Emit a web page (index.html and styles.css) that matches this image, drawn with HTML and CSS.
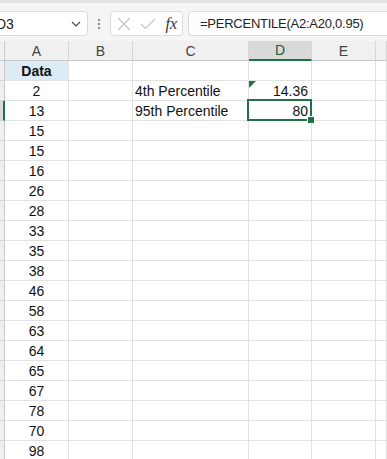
FILE: index.html
```html
<!DOCTYPE html>
<html lang="en">

<head>
    <meta charset="UTF-8">
    <title>PERCENTILE</title>
    <link rel="stylesheet" href="styles.css">
</head>

<body>
    <div class="toolbar">
        <div class="namebox">
            <span class="name">D3</span>
            <svg class="chevron" width="10" height="6" viewBox="0 0 10 6">
                <path d="M1 1 L5 5 L9 1" fill="none" stroke="#444" stroke-width="1.2" />
            </svg>
        </div>
        <div class="dots">
            <span></span>
            <span></span>
            <span></span>
        </div>
        <div class="actions">
            <svg width="14" height="14" viewBox="0 0 14 14">
                <path d="M1 1 L13 13 M13 1 L1 13" stroke="#c4c4c4" stroke-width="1.2" />
            </svg>
            <svg width="16" height="12" viewBox="0 0 16 12">
                <path d="M1 6 L5.5 10.5 L15 1" fill="none" stroke="#c4c4c4" stroke-width="1.2" />
            </svg>
            <span class="fx">fx</span>
        </div>
        <div class="formula">=PERCENTILE(A2:A20,0.95)</div>
    </div>

    <div class="sheet">
        <div class="corner"></div>
        <div class="colhead">A</div>
        <div class="colhead">B</div>
        <div class="colhead">C</div>
        <div class="colhead active">D</div>
        <div class="colhead">E</div>
        <div class="colhead"></div>

        <div class="rowhead"></div>
        <div class="cell num head">Data</div>
        <div class="cell"></div>
        <div class="cell"></div>
        <div class="cell"></div>
        <div class="cell"></div>
        <div class="cell"></div>

        <div class="rowhead"></div>
        <div class="cell num">2</div>
        <div class="cell"></div>
        <div class="cell text">4th Percentile</div>
        <div class="cell right flag">14.36</div>
        <div class="cell"></div>
        <div class="cell"></div>

        <div class="rowhead active"></div>
        <div class="cell num">13</div>
        <div class="cell"></div>
        <div class="cell text">95th Percentile</div>
        <div class="cell right selected">80</div>
        <div class="cell"></div>
        <div class="cell"></div>
    </div>

    <script>
        var values = [15, 15, 16, 26, 28, 33, 35, 38, 46, 58, 63, 64, 65, 67, 78, 70, 98];
        var sheet = document.getElementsByClassName('sheet')[0];
        for (var i = 0; i < values.length; i++) {
            var html = '<div class="rowhead"></div><div class="cell num">' + values[i] + '</div>';
            for (var j = 0; j < 5; j++) {
                html += '<div class="cell"></div>';
            }
            sheet.insertAdjacentHTML('beforeend', html);
        }
    </script>
</body>

</html>
```

FILE: styles.css
```css
* {
    margin: 0px;
    padding: 0px;
    box-sizing: border-box;
}

html,
body {
    width: 100%;
    height: 100%;
    overflow: hidden;
    background-color: #fff;
    font-family: "Liberation Sans", Arial, sans-serif;
}

.toolbar {
    display: flex;
    align-items: center;
    gap: 5px;
    height: 41px;
    padding-top: 3px;
    border-top: 3px solid #e3e3e3;
    background-color: #f5f5f5;
    overflow: hidden;
}

.namebox {
    display: flex;
    align-items: center;
    justify-content: space-between;
    flex: none;
    width: 98px;
    height: 25px;
    margin-left: -10px;
    padding: 0 6px 0 5px;
    background-color: #fff;
    border: 1px solid #dadada;
    border-radius: 4px;
    font-size: 14px;
    color: #222;
}

.dots {
    display: flex;
    flex-direction: column;
    gap: 2px;
    margin: 0 5px;
}

.dots span {
    display: block;
    width: 2px;
    height: 2px;
    background-color: #888;
}

.actions {
    display: flex;
    align-items: center;
    justify-content: space-between;
    flex: none;
    width: 73px;
    height: 25px;
    padding: 0 5px 0 6px;
    background-color: #fff;
    border: 1px solid #dadada;
    border-radius: 4px;
}

.fx {
    font-family: "Liberation Serif", "Times New Roman", serif;
    font-style: italic;
    font-size: 16px;
    color: #333;
}

.formula {
    flex: 1;
    height: 25px;
    line-height: 23px;
    margin-right: -10px;
    padding-left: 11px;
    background-color: #fff;
    border: 1px solid #dadada;
    border-radius: 4px;
    font-size: 13px;
    letter-spacing: -0.25px;
    color: #222;
    white-space: nowrap;
}

.sheet {
    display: grid;
    grid-template-columns: 5px 64px 64px 116px 63px 64px 1fr;
    grid-auto-rows: 20px;
    font-size: 14px;
    color: #111;
}

.corner,
.colhead,
.rowhead {
    background-color: #f0f0f0;
}

.corner {
    border-right: 1px solid #c8c8c8;
    border-bottom: 1px solid #c8c8c8;
}

.colhead {
    display: flex;
    align-items: center;
    justify-content: center;
    border-right: 1px solid #d6d6d6;
    border-bottom: 1px solid #c8c8c8;
    color: #444;
    font-size: 14px;
}

.colhead.active {
    background-color: #d9d9d9;
    border-bottom: 2px solid #1f7246;
    color: #1d5a38;
}

.rowhead {
    border-right: 1px solid #c8c8c8;
    border-bottom: 1px solid #d6d6d6;
}

.rowhead.active {
    background-color: #d9d9d9;
    border-right: 2px solid #1f7246;
}

.cell {
    position: relative;
    display: flex;
    align-items: center;
    padding: 1px 3px 0 3px;
    border-right: 1px solid #e1e1e1;
    border-bottom: 1px solid #e1e1e1;
    white-space: nowrap;
}

.num {
    justify-content: center;
}

.head {
    background-color: #ddebf7;
    font-weight: bold;
}

.text {
    padding-left: 2px;
}

.right {
    justify-content: flex-end;
}

.flag::before {
    content: '';
    position: absolute;
    left: 0;
    top: 0;
    border-top: 7px solid #1f7246;
    border-right: 7px solid transparent;
}

.selected::after {
    content: '';
    position: absolute;
    left: -2px;
    top: -2px;
    right: -1px;
    bottom: -1px;
    border: 2px solid #1f7246;
}

.selected::before {
    content: '';
    position: absolute;
    right: -4px;
    bottom: -4px;
    width: 6px;
    height: 6px;
    background-color: #1f7246;
    border: 1px solid #fff;
    z-index: 1;
}
```
